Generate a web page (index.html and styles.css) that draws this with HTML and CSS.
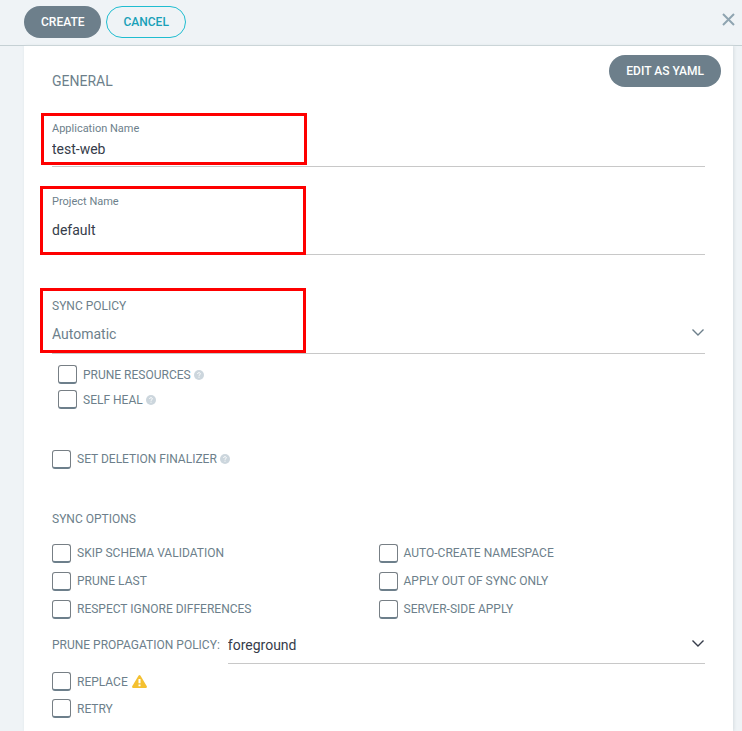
FILE: index.html
```
<!DOCTYPE html>
<html lang="en">
<head>
  <meta charset="UTF-8" />
  <meta name="viewport" content="width=device-width, initial-scale=1.0"/>
  <title>New Application</title>
  <link rel="stylesheet" href="styles.css">
</head>
<body>

  <header class="top-bar">
    <button type="submit" form="appForm" class="btn">CREATE</button>
    <button type="button" class="btn btn-outline">CANCEL</button>
    <button type="button" class="close-button" aria-label="Close">
      <svg width="13" height="13" viewBox="0 0 13 13"><path d="M1 1l11 11M12 1L1 12" /></svg>
    </button>
  </header>

  <form id="appForm" class="panel">
    <div class="panel-head">
      <h1>GENERAL</h1>
      <button type="button" class="btn">EDIT AS YAML</button>
    </div>

    <div class="panel-body">
      <div class="field field-name">
        <label for="appName">Application Name</label>
        <input type="text" id="appName" value="test-web">
        <span class="highlight"></span>
      </div>

      <div class="field field-project">
        <label for="project">Project Name</label>
        <input type="text" id="project" value="default">
        <span class="highlight"></span>
      </div>

      <div class="field field-sync">
        <label for="syncPolicy">SYNC POLICY</label>
        <div class="select">
          <select id="syncPolicy">
            <option>Automatic</option>
            <option>Manual</option>
          </select>
          <svg class="chevron" width="12" height="7" viewBox="0 0 12 7"><path d="M0.500 0.500L6 6l5.500-5.500" /></svg>
        </div>
        <span class="highlight"></span>
      </div>

      <div class="checks checks-auto">
        <div class="check">
          <input type="checkbox" id="prune"><label for="prune">PRUNE RESOURCES</label>
          <svg class="help" width="10" height="10" viewBox="0 0 10 10"><circle cx="5" cy="5" r="5" /><path d="M3.500 3.900C3.600 2.200 6.500 2.300 6.400 3.900C6.300 4.700 5 4.700 5 5.800M5 6.700v1" /></svg>
        </div>
        <div class="check">
          <input type="checkbox" id="selfHeal"><label for="selfHeal">SELF HEAL</label>
          <svg class="help" width="10" height="10" viewBox="0 0 10 10"><circle cx="5" cy="5" r="5" /><path d="M3.500 3.900C3.600 2.200 6.500 2.300 6.400 3.900C6.300 4.700 5 4.700 5 5.800M5 6.700v1" /></svg>
        </div>
      </div>

      <div class="check check-finalizer">
        <input type="checkbox" id="finalizer"><label for="finalizer">SET DELETION FINALIZER</label>
        <svg class="help" width="10" height="10" viewBox="0 0 10 10"><circle cx="5" cy="5" r="5" /><path d="M3.500 3.900C3.600 2.200 6.500 2.300 6.400 3.900C6.300 4.700 5 4.700 5 5.800M5 6.700v1" /></svg>
      </div>

      <h2>SYNC OPTIONS</h2>
      <div class="options">
        <div class="check"><input type="checkbox" id="skipSchema"><label for="skipSchema">SKIP SCHEMA VALIDATION</label></div>
        <div class="check"><input type="checkbox" id="autoCreate"><label for="autoCreate">AUTO-CREATE NAMESPACE</label></div>
        <div class="check"><input type="checkbox" id="pruneLast"><label for="pruneLast">PRUNE LAST</label></div>
        <div class="check"><input type="checkbox" id="outOfSync"><label for="outOfSync">APPLY OUT OF SYNC ONLY</label></div>
        <div class="check"><input type="checkbox" id="ignoreDiff"><label for="ignoreDiff">RESPECT IGNORE DIFFERENCES</label></div>
        <div class="check"><input type="checkbox" id="serverSide"><label for="serverSide">SERVER-SIDE APPLY</label></div>
      </div>

      <div class="policy">
        <label for="propagation">PRUNE PROPAGATION POLICY:</label>
        <div class="select select-dark">
          <select id="propagation">
            <option>foreground</option>
            <option>background</option>
            <option>orphan</option>
          </select>
          <svg class="chevron" width="12" height="7" viewBox="0 0 12 7"><path d="M0.500 0.500L6 6l5.500-5.500" /></svg>
        </div>
      </div>

      <div class="checks checks-last">
        <div class="check">
          <input type="checkbox" id="replace"><label for="replace">REPLACE</label>
          <svg class="warning" width="15" height="13" viewBox="0 0 15 13"><path d="M6.600 0.600Q7.500-0.500 8.400 0.600L14.800 11.300Q15.200 12.800 13.800 13H1.200Q-0.200 12.800 0.200 11.300Z" /><path class="mark" d="M7.500 4v4.200M7.500 9.500v1.700" /></svg>
        </div>
        <div class="check"><input type="checkbox" id="retry"><label for="retry">RETRY</label></div>
      </div>
    </div>
  </form>

</body>
</html>
```
FILE: styles.css
```
* {
  box-sizing: border-box;
}

body {
  display: flex;
  flex-direction: column;
  min-height: 100vh;
  margin: 0;
  background-color: #eff3f6;
  color: #6d7f8b;
  font-family: Roboto, "Liberation Sans", sans-serif;
  font-size: 12px;
  line-height: 20px;
}

button,
input,
select {
  margin: 0;
  padding: 0;
  border: none;
  background: none;
  font-family: inherit;
}

h1,
h2 {
  margin: 0;
  font-weight: 400;
}

svg {
  fill: none;
  stroke: currentColor;
}

.top-bar {
  display: flex;
  gap: 5px;
  height: 46px;
  padding: 6px 7px 0 24px;
  border-bottom: 1px solid #c5d0d4;
}

.btn {
  height: 32px;
  padding: 0 17px;
  border-radius: 16px;
  background-color: #6d7f8b;
  color: #fff;
  font-size: 12px;
  font-weight: 500;
  cursor: pointer;
}

.btn-outline {
  padding: 0 16px;
  border: 1px solid #1fbdd0;
  background-color: transparent;
  color: #18a0b8;
}

.close-button {
  display: flex;
  align-items: center;
  height: 26px;
  margin-left: auto;
  color: #8fa4b1;
  cursor: pointer;
}

.close-button svg {
  stroke-width: 2;
}

.panel {
  flex: 1;
  margin: 0 9px 0 24px;
  background-color: #fff;
  box-shadow: 1px 0 3px #d5dce0;
}

.panel-head {
  display: flex;
  justify-content: space-between;
  align-items: flex-start;
  padding: 9px 12px 0 28px;
}

h1 {
  padding-top: 16px;
  font-size: 14px;
}

.panel-body {
  padding: 0 28px 8px;
}

.field {
  position: relative;
  border-bottom: 1px solid #c8c8c8;
}

.field label {
  display: block;
  font-size: 11px;
}

.field input {
  display: block;
  width: 100%;
  height: 20px;
  color: #363c4a;
  font-size: 14px;
}

.field-name {
  margin-top: 28px;
  padding-bottom: 7px;
}

.field-project {
  margin-top: 25px;
  padding-bottom: 6px;
}

.field-project input {
  height: 36px;
}

.field-sync {
  margin-top: 41px;
  padding-bottom: 1px;
}

.field-sync label {
  font-size: 12px;
}

/* red frames drawn over the fields */
.highlight {
  position: absolute;
  top: -6px;
  left: -11px;
  width: 266px;
  height: 52px;
  border: 3px solid #fe0000;
  pointer-events: none;
}

.field-project .highlight {
  left: -12px;
  height: 69px;
}

.field-sync .highlight {
  top: -8px;
  left: -12px;
  height: 65px;
}

.select {
  position: relative;
  flex: 1;
}

.select select {
  display: block;
  width: 100%;
  height: 36px;
  appearance: none;
  color: inherit;
  font-size: 14px;
}

.chevron {
  position: absolute;
  top: 13px;
  right: 1px;
  stroke-width: 1.4;
  pointer-events: none;
}

.select-dark {
  border-bottom: 1px solid #c8c8c8;
  color: #363c4a;
}

.check {
  display: flex;
  align-items: center;
  height: 28px;
}

.check input {
  appearance: none;
  width: 19px;
  height: 19px;
  margin-right: 6px;
  border: 1px solid #777f85;
  border-bottom: 2px solid #6d7f8b;
  border-radius: 3px;
}

.check input:checked {
  background-color: #6d7f8b;
}

.checks-auto {
  padding: 8px 0 0 6px;
}

.checks-auto .check {
  height: 25px;
}

.check-finalizer {
  margin-top: 33px;
}

.help {
  margin-left: 3px;
  fill: #ccd6dd;
  stroke: none;
}

.help path {
  fill: none;
  stroke: #fff;
}

.warning {
  margin-left: 4px;
  fill: #f4c030;
  stroke: none;
}

.warning .mark {
  stroke: #fff;
  stroke-width: 2;
}

h2 {
  margin-top: 36px;
  font-size: 12px;
}

.options {
  display: grid;
  grid-template-columns: 1fr 1fr;
  margin-top: 10px;
}

.policy {
  display: flex;
  gap: 8px;
  margin-top: 4px;
}

.policy > label {
  line-height: 36px;
}

.checks-last {
  margin-top: 4px;
}

.checks-last .check {
  height: 27px;
}
```
